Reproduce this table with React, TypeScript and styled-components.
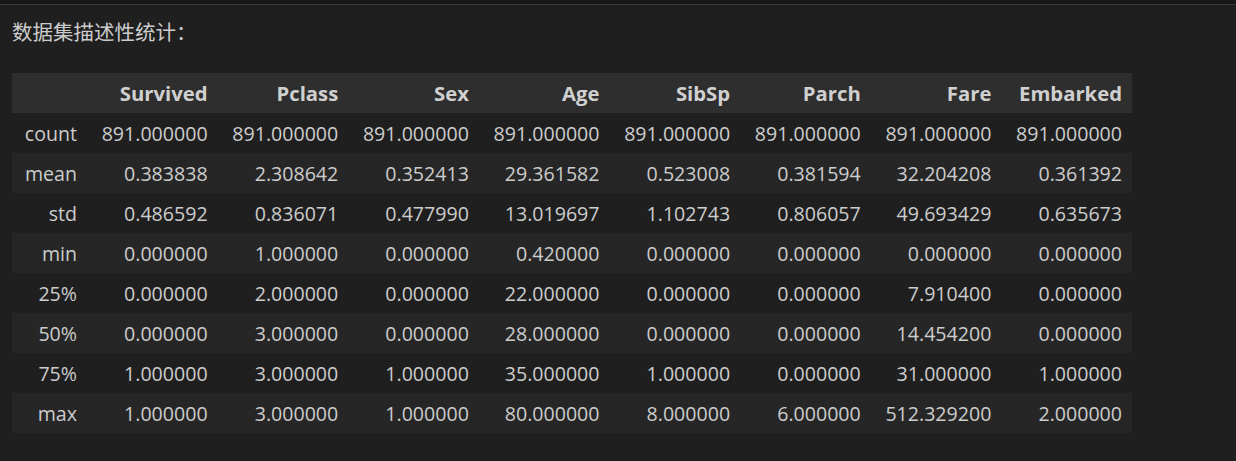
import React from "react";
import styled, { createGlobalStyle } from "styled-components";

const Global = createGlobalStyle`
  html, body { margin: 0; padding: 0; background: #1f1f1f; }
  body { font-family: "Open Sans", "Noto Sans CJK SC", sans-serif; color: #cccccc; }
`;

const Page = styled.div`
  width: 1236px;
  height: 461px;
  background: #1f1f1f;
  overflow: hidden;
`;

const TopBar = styled.div`
  height: 4px;
  background: #181818;
  border-bottom: 1px solid #3a3a3a;
`;

const Output = styled.div`
  padding: 13px 12px 0 12px;
`;

const Title = styled.div`
  font-family: "Noto Sans CJK SC", sans-serif;
  font-size: 20.5px;
  line-height: 26px;
  color: #cccccc;
  margin-bottom: 29px;
`;

const Table = styled.table`
  border-collapse: collapse;
  border-spacing: 0;
  table-layout: fixed;
  width: 1120px;
  font-size: 19.6px;
  color: #cccccc;
`;

const IndexCol = styled.col`
  width: 75px;
`;

const HeadRow = styled.tr`
  background: #2e2e2e;
`;

const Row = styled.tr<{ $striped: boolean }>`
  background: ${(p) => (p.$striped ? "#262626" : "transparent")};
`;

const Th = styled.th`
  height: 40px;
  padding: 0 10px;
  text-align: right;
  font-weight: 700;
  font-size: 20.3px;
  color: #d0d0d0;
  white-space: nowrap;
`;

const Td = styled.td`
  height: 40px;
  padding: 0 10px;
  text-align: right;
  white-space: nowrap;
`;

const columns = ["Survived", "Pclass", "Sex", "Age", "SibSp", "Parch", "Fare", "Embarked"];

const rows: [string, string[]][] = [
  ["count", ["891.000000", "891.000000", "891.000000", "891.000000", "891.000000", "891.000000", "891.000000", "891.000000"]],
  ["mean", ["0.383838", "2.308642", "0.352413", "29.361582", "0.523008", "0.381594", "32.204208", "0.361392"]],
  ["std", ["0.486592", "0.836071", "0.477990", "13.019697", "1.102743", "0.806057", "49.693429", "0.635673"]],
  ["min", ["0.000000", "1.000000", "0.000000", "0.420000", "0.000000", "0.000000", "0.000000", "0.000000"]],
  ["25%", ["0.000000", "2.000000", "0.000000", "22.000000", "0.000000", "0.000000", "7.910400", "0.000000"]],
  ["50%", ["0.000000", "3.000000", "0.000000", "28.000000", "0.000000", "0.000000", "14.454200", "0.000000"]],
  ["75%", ["1.000000", "3.000000", "1.000000", "35.000000", "1.000000", "0.000000", "31.000000", "1.000000"]],
  ["max", ["1.000000", "3.000000", "1.000000", "80.000000", "8.000000", "6.000000", "512.329200", "2.000000"]],
];

export default function App() {
  return (
    <Page>
      <Global />
      <TopBar />
      <Output>
        <Title>数据集描述性统计：</Title>
        <Table>
          <colgroup>
            <IndexCol />
            {columns.map((c) => (
              <col key={c} />
            ))}
          </colgroup>
          <thead>
            <HeadRow>
              <Th />
              {columns.map((c) => (
                <Th key={c}>{c}</Th>
              ))}
            </HeadRow>
          </thead>
          <tbody>
            {rows.map(([label, vals], i) => (
              <Row key={label} $striped={i % 2 === 1}>
                <Td>{label}</Td>
                {vals.map((v, j) => (
                  <Td key={j}>{v}</Td>
                ))}
              </Row>
            ))}
          </tbody>
        </Table>
      </Output>
    </Page>
  );
}
